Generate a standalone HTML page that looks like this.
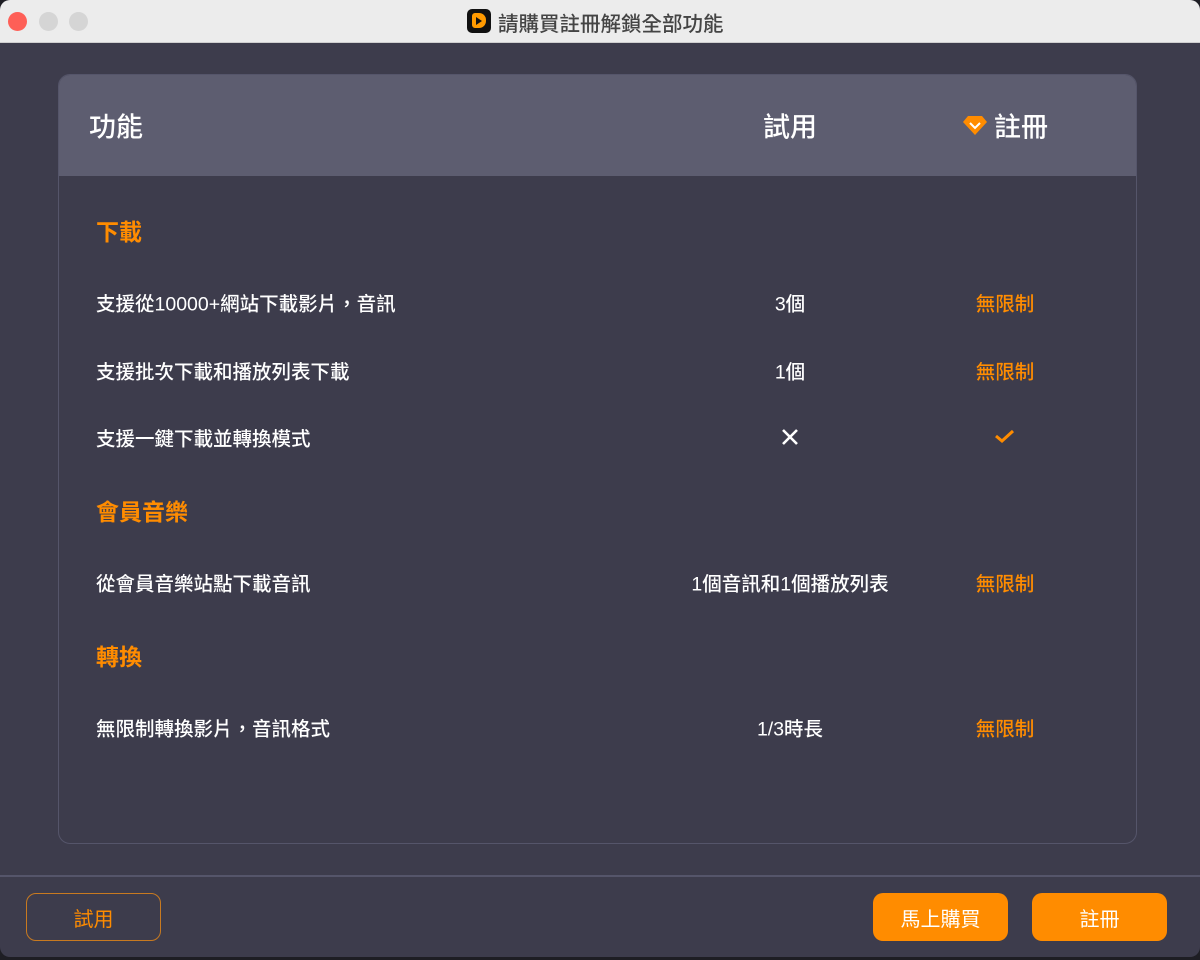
<!DOCTYPE html>
<html><head><meta charset="utf-8"><style>
*{margin:0;padding:0;box-sizing:border-box}
body{width:1200px;height:960px;background:#1e1e24;font-family:"Liberation Sans","Noto Sans CJK TC",sans-serif;position:relative;overflow:hidden}
.win{position:absolute;left:0;top:0;width:1200px;height:957px;background:#3d3c4c;border-radius:10px;overflow:hidden}
.tb{position:absolute;left:0;top:0;width:1200px;height:43px;background:#ececec;border-bottom:1px solid #cfcfcf}
.dot{position:absolute;top:12px;width:19px;height:19px;border-radius:50%}
.tt{position:absolute;left:498px;top:7px;font-size:20.5px;color:#444;font-weight:500}
.card{position:absolute;left:58px;top:74px;width:1079px;height:770px;border:1px solid #55556a;border-radius:12px;overflow:hidden}
.hd{position:absolute;left:0;top:0;width:100%;height:101px;background:#5d5d70}
.t{position:absolute;white-space:nowrap;transform:translateY(-50%)}
.w{color:#fff;font-weight:500;font-size:19.5px}
.o{color:#ff8c00;font-weight:500;font-size:19.5px}
.c1{left:790px;transform:translate(-50%,-50%)}
.c2{left:1005px;transform:translate(-50%,-50%)}
.h{color:#fff;font-size:27px;font-weight:500}
.sec{color:#ff8c00;font-weight:bold;font-size:23px;left:96px}
.line{position:absolute;left:0;top:875px;width:1200px;height:2px;background:#55556a}
.btn{position:absolute;top:893px;height:48px;width:135px;border-radius:10px;font-size:20px;display:flex;align-items:center;justify-content:center}
</style></head><body>
<div class="win">
<div class="tb">
<div class="dot" style="left:8px;background:#fe5f57"></div>
<div class="dot" style="left:39px;background:#d5d5d5"></div>
<div class="dot" style="left:69px;background:#d5d5d5"></div>
<div style="position:absolute;left:467px;top:9px;width:24px;height:24px;background:#111;border-radius:5px"><div style="position:absolute;left:5px;top:4px;width:14px;height:15px;background:#ff9a00;border-radius:3px 7px 7px 3px"></div><div style="position:absolute;left:9px;top:8px;width:0;height:0;border-left:6px solid #111;border-top:4px solid transparent;border-bottom:4px solid transparent"></div></div>
<div class="tt">請購買註冊解鎖全部功能</div>
</div>
<div class="card"><div class="hd"></div></div>
<div class="t h" style="left:89px;top:125px">功能</div>
<div class="t h c1" style="top:125px">試用</div>
<div class="t h" style="left:994px;top:125px">註冊</div>
<svg style="position:absolute;left:962px;top:114px" width="26" height="22" viewBox="0 0 26 22"><path d="M6 2H20L25 8L13 21L1 8Z" fill="#ff8c00"/><path d="M8 9L13 14L18 9" stroke="#fff" stroke-width="2" fill="none"/></svg>
<div class="t sec" style="top:230px">下載</div>
<div class="t w" style="left:96px;top:302px">支援從10000+網站下載影片，音訊</div>
<div class="t w c1" style="top:302px">3個</div>
<div class="t o c2" style="top:302px">無限制</div>
<div class="t w" style="left:96px;top:370px">支援批次下載和播放列表下載</div>
<div class="t w c1" style="top:370px">1個</div>
<div class="t o c2" style="top:370px">無限制</div>
<div class="t w" style="left:96px;top:437px">支援一鍵下載並轉換模式</div>
<svg style="position:absolute;left:781px;top:429px" width="18" height="16"><path d="M2 1L16 15M16 1L2 15" stroke="#fff" stroke-width="2.6"/></svg>
<svg style="position:absolute;left:994px;top:428px" width="22" height="16"><path d="M2 8L8 13L19 3" stroke="#ff8c00" stroke-width="3" fill="none"/></svg>
<div class="t sec" style="top:510px">會員音樂</div>
<div class="t w" style="left:96px;top:582px">從會員音樂站點下載音訊</div>
<div class="t w c1" style="top:582px">1個音訊和1個播放列表</div>
<div class="t o c2" style="top:582px">無限制</div>
<div class="t sec" style="top:655px">轉換</div>
<div class="t w" style="left:96px;top:727px">無限制轉換影片，音訊格式</div>
<div class="t w c1" style="top:727px">1/3時長</div>
<div class="t o c2" style="top:727px">無限制</div>
<div class="line"></div>
<div class="btn" style="left:26px;border:1.5px solid #c87a20;color:#ff8c00">試用</div>
<div class="btn" style="left:873px;background:#ff8c00;color:#fff">馬上購買</div>
<div class="btn" style="left:1032px;background:#ff8c00;color:#fff">註冊</div>
</div>
</body></html>
